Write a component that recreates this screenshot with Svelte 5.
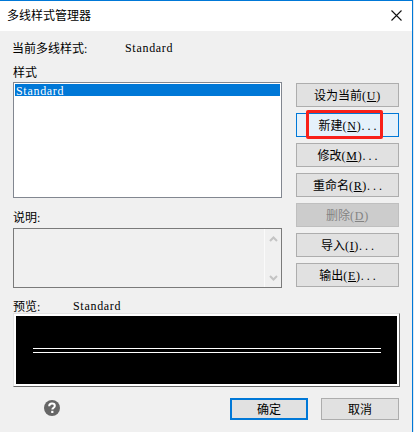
<script>
  const sideButtons = [
    { zh: '设为当前', key: 'U', dots: false },
    { zh: '新建', key: 'N', dots: true, focus: true },
    { zh: '修改', key: 'M', dots: true },
    { zh: '重命名', key: 'R', dots: true },
    { zh: '删除', key: 'D', dots: false, disabled: true },
    { zh: '导入', key: 'I', dots: true },
    { zh: '输出', key: 'E', dots: true }
  ];
</script>

<div class="window">
  <header class="titlebar">
    <span class="title">多线样式管理器</span>
    <svg class="close" width="11" height="11" viewBox="0 0 11 11" aria-hidden="true">
      <path d="M0.5 0.5 L10.5 10.5 M10.5 0.5 L0.5 10.5" stroke="#111" stroke-width="1.1" fill="none" />
    </svg>
  </header>

  <div class="body">
    <div class="current">
      <span class="current-label">当前多线样式<span class="l">:</span></span>
      <span class="l">Standard</span>
    </div>

    <div class="main">
      <div class="left">
        <div class="caption first">样式</div>
        <div class="listbox">
          <div class="selected"><span class="l">Standard</span></div>
        </div>
        <div class="caption second">说明<span class="l">:</span></div>
        <div class="desc">
          <div class="scrollbar">
            <svg width="9" height="6" viewBox="0 0 9 6" aria-hidden="true">
              <path d="M1 5 L4.5 1.5 L8 5" stroke="#c4c4c4" stroke-width="2" fill="none" />
            </svg>
            <svg width="9" height="6" viewBox="0 0 9 6" aria-hidden="true">
              <path d="M1 1 L4.5 4.5 L8 1" stroke="#c4c4c4" stroke-width="2" fill="none" />
            </svg>
          </div>
        </div>
      </div>

      <div class="side">
        {#each sideButtons as b}
          <div class="btn" class:focus={b.focus} class:disabled={b.disabled}>
            <span class="label">{b.zh}<span class="l">(<u>{b.key}</u>)</span>{#if b.dots}<span class="dots">...</span>{/if}</span>
            {#if b.focus}<span class="mark"></span>{/if}
          </div>
        {/each}
      </div>
    </div>

    <div class="preview-label">
      <span class="preview-caption">预览<span class="l">:</span></span>
      <span class="l">Standard</span>
    </div>
    <div class="preview">
      <div class="canvas">
        <div class="lines"></div>
      </div>
    </div>

    <footer class="footer">
      <svg class="help" width="16" height="16" viewBox="0 0 16 16" aria-hidden="true">
        <circle cx="8" cy="8" r="8" fill="#666" />
        <path d="M5.2 6.2 C5.2 4.4 6.5 3.6 8 3.6 C9.6 3.6 10.8 4.5 10.8 5.9 C10.8 7.6 8.3 7.8 8.3 9.6" stroke="#fff" stroke-width="2" fill="none" />
        <rect x="7.2" y="10.8" width="2.2" height="2.2" fill="#fff" />
      </svg>
      <div class="actions">
        <div class="btn action default">确定</div>
        <div class="btn action cancel">取消</div>
      </div>
    </footer>
  </div>
</div>

<style>
  :global(body) {
    margin: 0;
    background: #dfe8f0;
  }
  .window {
    box-sizing: border-box;
    width: 413px;
    height: 432px;
    border-top: 1px solid #0078d7;
    border-right: 1px solid #0078d7;
    display: flex;
    flex-direction: column;
    font: 12px/14px "Noto Sans CJK SC", sans-serif;
    color: #000;
    background: #f0f0f0;
    overflow: hidden;
  }
  .l {
    font-family: "Liberation Serif", serif;
    letter-spacing: 0.7px;
  }
  .label {
    white-space: nowrap;
  }
  .dots {
    font-family: "Liberation Serif", serif;
    letter-spacing: 3px;
    margin-right: -3px;
  }
  .titlebar {
    height: 30px;
    flex: none;
    background: #fff;
    display: flex;
    align-items: center;
    justify-content: space-between;
    padding: 0 10px 2px 7px;
    box-sizing: border-box;
  }
  .body {
    flex: 1;
    display: flex;
    flex-direction: column;
    padding: 10px 12px 0 13px;
    min-height: 0;
  }
  .current {
    display: flex;
    height: 14px;
    margin-left: -1px;
  }
  .current-label {
    width: 113px;
  }
  .main {
    display: flex;
    justify-content: space-between;
    margin-top: 10px;
    padding-right: 1px;
  }
  .left {
    width: 269px;
    display: flex;
    flex-direction: column;
  }
  .caption {
    height: 14px;
    flex: none;
  }
  .first {
    margin-bottom: 3px;
  }
  .second {
    margin-top: 12px;
    margin-bottom: 4px;
  }
  .listbox {
    box-sizing: border-box;
    height: 116px;
    background: #fff;
    border: 1px solid #828790;
    padding: 1px;
  }
  .selected {
    height: 12px;
    line-height: 12px;
    background: #0078d7;
    color: #fff;
    padding-left: 1px;
  }
  .desc {
    box-sizing: border-box;
    height: 60px;
    border: 1px solid #7a7a7a;
    background: #f0f0f0;
    display: flex;
    justify-content: flex-end;
  }
  .scrollbar {
    width: 17px;
    display: flex;
    flex-direction: column;
    justify-content: space-between;
    align-items: center;
    padding: 7px 0 6px;
    border-left: 1px solid #fafafa;
    box-sizing: border-box;
  }
  .side {
    width: 103px;
    display: flex;
    flex-direction: column;
    gap: 6px;
    margin-top: 18px;
  }
  .btn {
    position: relative;
    box-sizing: border-box;
    height: 24px;
    background: #e1e1e1;
    border: 1px solid #adadad;
    display: flex;
    align-items: center;
    justify-content: center;
  }
  .focus {
    background: #e5f1fb;
    border-color: #0078d7;
  }
  .disabled {
    background: #ccc;
    border-color: #bfbfbf;
    color: #838383;
  }
  .mark {
    position: absolute;
    left: 9px;
    top: -4px;
    width: 77px;
    height: 29px;
    box-sizing: border-box;
    border: 3px solid #f8201a;
    border-radius: 2px;
  }
  .preview-label {
    display: flex;
    height: 14px;
    margin-top: 11px;
  }
  .preview-caption {
    width: 60px;
  }
  .preview {
    box-sizing: border-box;
    width: 387px;
    height: 74px;
    border: 1px solid;
    border-color: #e3e3e3 #696969 #696969 #e3e3e3;
    background: #fff;
    padding: 2px;
    display: flex;
  }
  .canvas {
    flex: 1;
    background: #000;
    padding: 32px 16px 0 17px;
  }
  .lines {
    height: 5px;
    box-sizing: border-box;
    border-top: 1px solid #fff;
    border-bottom: 1px solid #fff;
  }
  .footer {
    display: flex;
    align-items: flex-start;
    justify-content: space-between;
    margin-top: 11px;
    padding: 0 1px 0 31px;
    height: 22px;
  }
  .help {
    margin-top: 2px;
  }
  .actions {
    display: flex;
    gap: 13px;
  }
  .action {
    width: 78px;
    height: 22px;
  }
  .default {
    border: 2px solid #0078d7;
  }
</style>
